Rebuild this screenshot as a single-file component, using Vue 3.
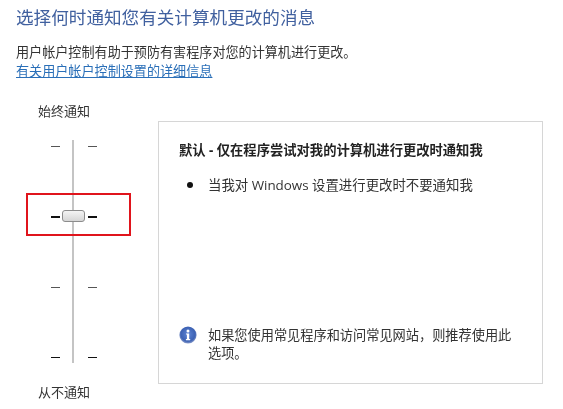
<template>
  <div class="page">
    <h1 class="title">选择何时通知您有关计算机更改的消息</h1>
    <p class="desc">用户帐户控制有助于预防有害程序对您的计算机进行更改。</p>
    <a class="link" href="#">有关用户帐户控制设置的详细信息</a>

    <div class="main">
      <div class="level">
        <div class="level-label">始终通知</div>
        <div class="slider">
          <div class="ticks">
            <span v-for="t in ticks" :key="t" class="tick" :class="{ dark: t === active, end: t === 3 }"></span>
          </div>
          <div class="track"></div>
          <div class="ticks">
            <span v-for="t in ticks" :key="t" class="tick" :class="{ dark: t === active, end: t === 3 }"></span>
          </div>
          <div class="thumb"></div>
          <div class="mark"></div>
        </div>
        <div class="level-label bottom">从不通知</div>
      </div>

      <div class="panel">
        <div class="panel-head">默认 - 仅在程序尝试对我的计算机进行更改时通知我</div>
        <ul class="points">
          <li>当我对 Windows 设置进行更改时不要通知我</li>
        </ul>
        <div class="tip">
          <svg class="info" width="18" height="18" viewBox="0 0 18 18">
            <defs>
              <radialGradient id="ball" cx="50%" cy="45%" r="55%">
                <stop offset="0" stop-color="#5f86d6" />
                <stop offset="0.75" stop-color="#3d62b4" />
                <stop offset="1" stop-color="#8a9ccb" />
              </radialGradient>
            </defs>
            <circle cx="9" cy="9" r="8.6" fill="url(#ball)" />
            <circle cx="9" cy="4.9" r="1.5" fill="#fff" />
            <path d="M7 7.4h3.2v5.6h1v1.2H6.9V13h1V8.6H7z" fill="#fff" />
          </svg>
          <p>如果您使用常见程序和访问常见网站，则推荐使用此选项。</p>
        </div>
      </div>
    </div>
  </div>
</template>

<script setup>
const ticks = [0, 1, 2, 3]
const active = 1
</script>

<style>
html, body {
  background: #fff;
}
</style>

<style scoped>
.page {
  width: 563px;
  height: 409px;
  box-sizing: border-box;
  padding: 6px 20px 0 16px;
  overflow: hidden;
  font-family: "Open Sans", "Noto Sans CJK SC", sans-serif;
  font-size: 13px;
  color: #333;
  background: #fff;
  filter: blur(0.35px);
}

.title {
  margin: 0;
  font-size: 17.6px;
  line-height: 22px;
  font-weight: 400;
  color: #40609f;
}

.desc {
  margin: 15px 0 0;
  width: 400px;
  font-size: 13.1px;
  line-height: 18px;
}

.link {
  display: block;
  width: fit-content;
  margin-top: 1px;
  font-size: 13.1px;
  line-height: 18px;
  color: #2a6fb8;
  text-decoration: underline;
}

.main {
  display: flex;
  margin-top: 22px;
}

.level {
  width: 142px;
  flex: none;
}

.level-label {
  width: 52px;
  margin-left: 22px;
  line-height: 18px;
  font-size: 13px;
  white-space: nowrap;
}

.level-label.bottom {
  margin-top: 20px;
}

.slider {
  position: relative;
  display: flex;
  justify-content: center;
  gap: 13px;
  width: 46px;
  height: 223px;
  margin: 20px 0 0 35px;
}

.ticks {
  display: flex;
  flex-direction: column;
  justify-content: space-between;
  padding: 6px 0 5px;
}

.tick {
  display: block;
  width: 9px;
  height: 1px;
  background: #555;
}

.tick.end {
  background: #111;
}

.tick.dark {
  height: 2px;
  background: #111;
}

.track {
  width: 2px;
  flex: none;
  margin: 0 1px 0 -1px;
  background: #c4c4c4;
}

.thumb {
  position: absolute;
  left: 11px;
  top: 70px;
  width: 23px;
  height: 12px;
  box-sizing: border-box;
  border: 1px solid #8c8c8c;
  border-radius: 3px;
  background: linear-gradient(#f4f4f4, #d6d6d6);
}

.mark {
  position: absolute;
  left: -25px;
  top: 53px;
  width: 105px;
  height: 43px;
  box-sizing: border-box;
  border: 2px solid #e0141c;
}

.panel {
  position: relative;
  width: 386px;
  height: 263px;
  margin-top: 19px;
  box-sizing: border-box;
  border: 1px solid #d6d6d6;
  padding: 19px 20px 0 20px;
  display: flex;
  flex-direction: column;
}

.panel-head {
  font-size: 13.3px;
  line-height: 18px;
  font-weight: 700;
  color: #222;
}

.points {
  list-style: none;
  margin: 17px 0 0;
  padding: 0 0 0 29px;
  line-height: 18px;
}

.points li {
  position: relative;
  font-size: 13.4px;
}

.points li::before {
  content: "";
  position: absolute;
  left: -21px;
  top: 6px;
  width: 6px;
  height: 6px;
  border-radius: 50%;
  background: #111;
}

.tip {
  display: flex;
  margin-top: auto;
  margin-bottom: 21px;
}

.info {
  flex: none;
  margin-top: 0;
}

.tip p {
  margin: 0 0 0 11px;
  width: 308px;
  font-size: 13.2px;
  line-height: 18px;
}
</style>
